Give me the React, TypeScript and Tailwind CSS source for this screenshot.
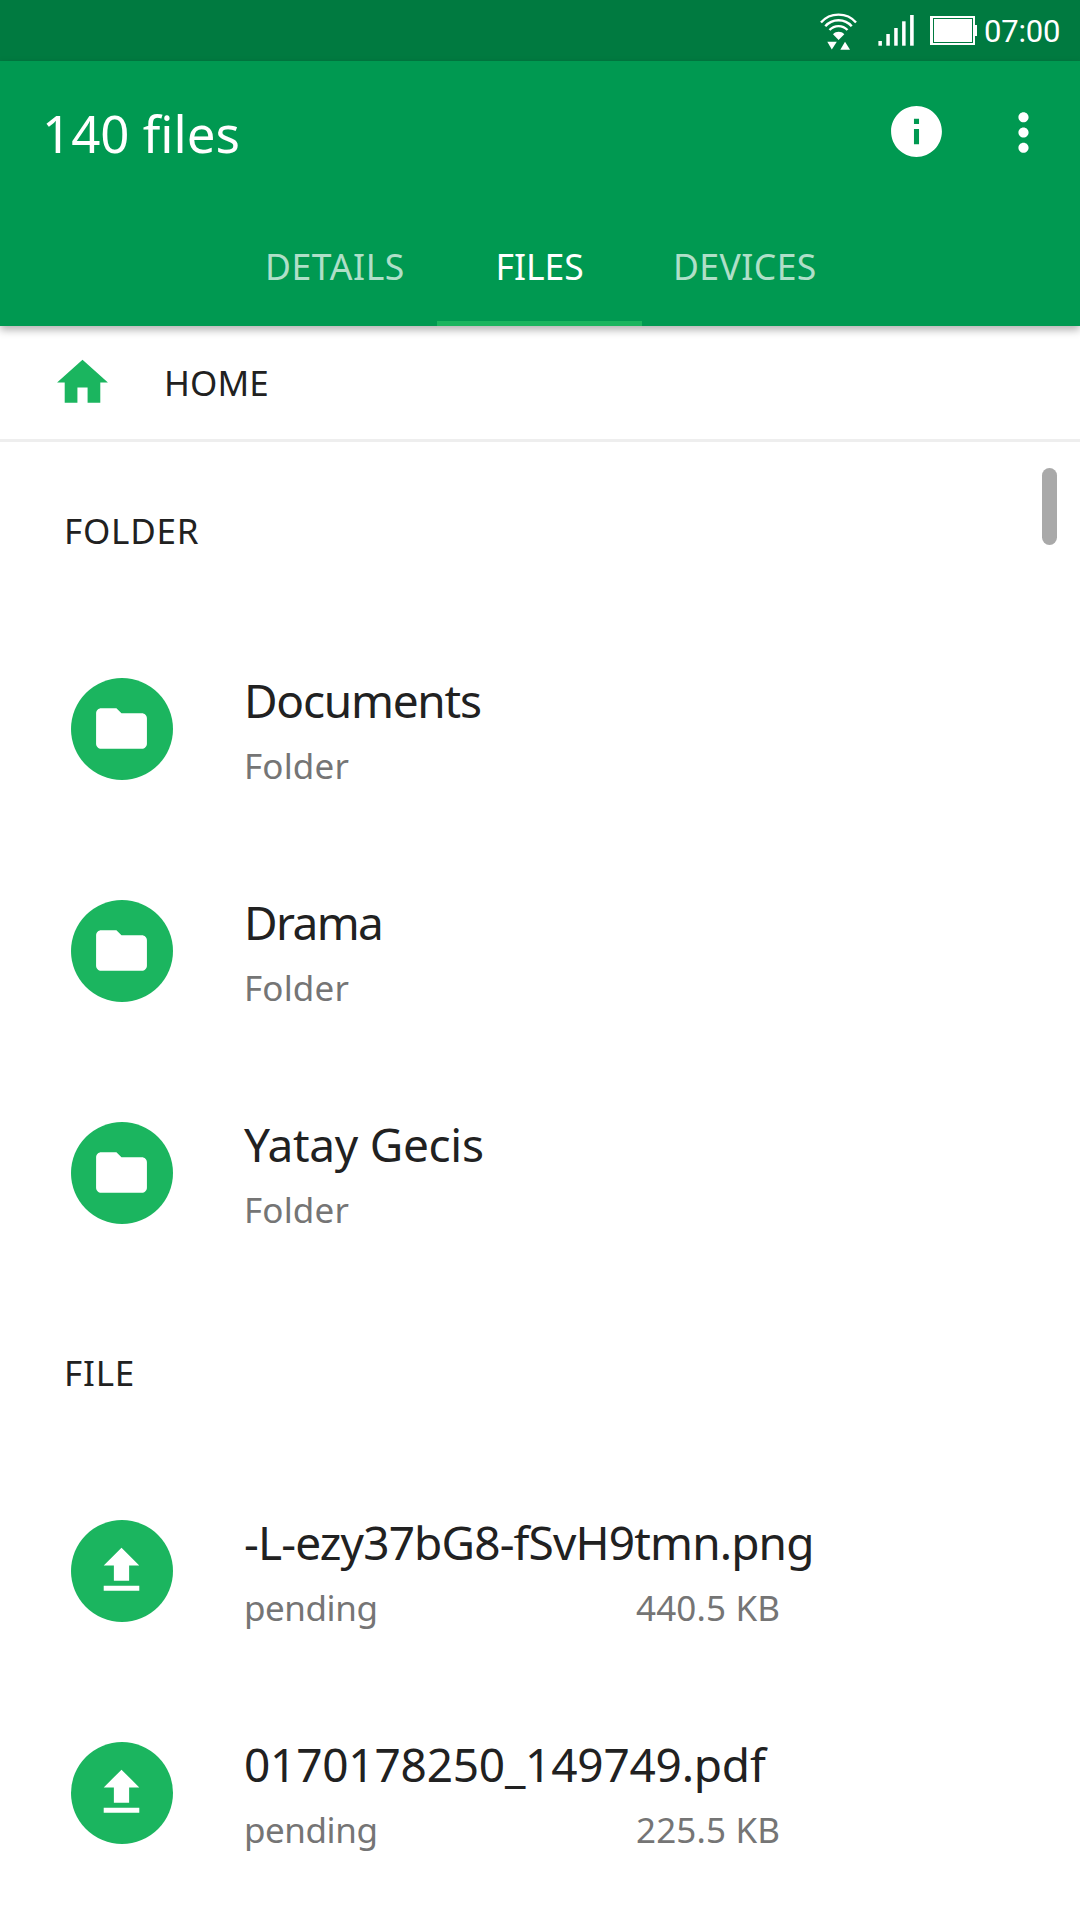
import type { ReactNode } from "react";

function StatusIcons() {
  return (
    <svg className="h-[61px] w-[180px] shrink-0" viewBox="0 0 180 61" fill="none">
      <g stroke="#fff" strokeWidth="2.4">
        <path d="M21 22.5C30 12 47 12 56 22.5" />
        <path d="M25.3 26.3C32 18.2 45 18.2 51.7 26.3" />
        <path d="M29.5 30C34.5 24.8 42.5 24.8 47.5 30" />
      </g>
      <g fill="#fff">
        <path d="M33 34.2c3.3-3.2 8-3.2 11.3 0L38.6 40z" />
        <path d="M27.3 41.7h9.5L31.8 49.5z" />
        <path d="M40.3 49.7L45 41.8l5 7.9z" />
        <rect x="78.4" y="41" width="3.5" height="4.7" />
        <rect x="86.3" y="34" width="3.5" height="11.7" />
        <rect x="94.2" y="28" width="3.5" height="17.7" />
        <rect x="102.1" y="21.3" width="3.5" height="24.4" />
        <rect x="110.1" y="15" width="3.6" height="30.7" />
        <path fillRule="evenodd" d="M130 16h45v29h-45zM133 18v25h40V18z" />
        <rect x="134" y="19" width="38" height="23" />
        <rect x="174.5" y="25" width="2.5" height="11" />
      </g>
    </svg>
  );
}

function Icon({ d, className }: { d: string; className?: string }) {
  return (
    <svg viewBox="0 0 24 24" className={`size-[61px] shrink-0 fill-current ${className ?? ""}`}>
      <path d={d} />
    </svg>
  );
}

const INFO = "M12 2C6.48 2 2 6.48 2 12s4.48 10 10 10 10-4.48 10-10S17.52 2 12 2zm1 15h-2v-6h2v6zm0-8h-2V7h2v2z";
const MORE =
  "M12 8c1.1 0 2-.9 2-2s-.9-2-2-2-2 .9-2 2 .9 2 2 2zm0 2c-1.1 0-2 .9-2 2s.9 2 2 2 2-.9 2-2-.9-2-2-2zm0 6c-1.1 0-2 .9-2 2s.9 2 2 2 2-.9 2-2-.9-2-2-2z";
const HOME = "M10 20v-6h4v6h5v-8h3L12 3 2 12h3v8z";
const FOLDER = "M10 4H4c-1.1 0-1.99.9-1.99 2L2 18c0 1.1.9 2 2 2h16c1.1 0 2-.9 2-2V8c0-1.1-.9-2-2-2h-8l-2-2z";
const UPLOAD = "M9 16h6v-6h4l-7-7-7 7h4zm-4 2h14v2H5z";

function SectionTitle({ children }: { children: ReactNode }) {
  return (
    <h2 className="flex h-[176px] items-center pt-[2px] pl-[64px] text-[35px] leading-[48px] tracking-[0.8px]">
      {children}
    </h2>
  );
}

type Entry = { name: string; nameClass: string; icon: string; note: string; noteClass: string; size?: string };

function Row({ name, nameClass, icon, note, noteClass, size }: Entry) {
  return (
    <li className="flex h-[222px] items-center pl-[71px]">
      <span className="flex size-[102px] shrink-0 items-center justify-center rounded-full bg-[#1bb55f] pr-px pb-px text-white">
        <Icon d={icon} />
      </span>
      <div className="ml-[71px] flex flex-col gap-[12px] pt-[2px]">
        <div className={`text-[46px] leading-[60px] whitespace-nowrap ${nameClass}`}>{name}</div>
        <div className="flex text-[35px] leading-[48px] text-[#757575]">
          <span className={`w-[392px] ${noteClass}`}>{note}</span>
          {size && <span className="tracking-[0.15px]">{size}</span>}
        </div>
      </div>
    </li>
  );
}

const folders: Entry[] = [
  { name: "Documents", nameClass: "tracking-[-1.25px]", icon: FOLDER, note: "Folder", noteClass: "tracking-[0.15px]" },
  { name: "Drama", nameClass: "tracking-[-1.6px]", icon: FOLDER, note: "Folder", noteClass: "tracking-[0.15px]" },
  { name: "Yatay Gecis", nameClass: "tracking-[-0.28px]", icon: FOLDER, note: "Folder", noteClass: "tracking-[0.15px]" },
];

const files: Entry[] = [
  {
    name: "-L-ezy37bG8-fSvH9tmn.png",
    nameClass: "tracking-[-0.85px]",
    icon: UPLOAD,
    note: "pending",
    noteClass: "tracking-[-0.45px]",
    size: "440.5 KB",
  },
  {
    name: "0170178250_149749.pdf",
    nameClass: "tracking-[-0.22px]",
    icon: UPLOAD,
    note: "pending",
    noteClass: "tracking-[-0.45px]",
    size: "225.5 KB",
  },
];

export default function App() {
  return (
    <div className="flex h-[1920px] w-[1080px] flex-col overflow-hidden bg-white font-['Noto_Sans',sans-serif] text-[#212121]">
      <div className="flex h-[61px] shrink-0 items-center bg-[#007a40] pl-[800px] text-white">
        <StatusIcons />
        <span className="ml-[4px] pt-[2px] font-[Roboto,sans-serif] text-[31px] leading-[40px] tracking-[-0.2px]">
          07:00
        </span>
      </div>

      <header className="relative z-10 shrink-0 bg-[#009951] text-white shadow-[0_4px_8px_rgba(0,0,0,0.3)]">
        <div className="flex h-[142px] items-center pr-[26px] pl-[42px]">
          <h1 className="flex-1 pt-px text-[51px] leading-[64px]">140 files</h1>
          <Icon d={INFO} className="mb-px" />
          <Icon d={MORE} className="ml-[46px]" />
        </div>
        <nav className="flex h-[123px] justify-center text-[35.5px] leading-[127px] text-white/70">
          <span className="w-[205px] pl-[33.5px] tracking-[0.6px]">DETAILS</span>
          <span className="w-[205px] border-b-[5px] border-[#1bb55f] pl-[59px] tracking-[0px] text-white">FILES</span>
          <span className="w-[207px] pl-[31.5px] tracking-[0.45px]">DEVICES</span>
        </nav>
      </header>

      <div className="flex h-[116px] shrink-0 items-center border-b-3 border-[#eee] pl-[52px]">
        <Icon d={HOME} className="text-[#1bb55f]" />
        <span className="ml-[51px] text-[35px] leading-[48px] tracking-[0.1px]">HOME</span>
      </div>

      <main className="relative flex-1 overflow-hidden">
        <SectionTitle>FOLDER</SectionTitle>
        <ul>
          {folders.map((f) => (
            <Row key={f.name} {...f} />
          ))}
        </ul>
        <SectionTitle>FILE</SectionTitle>
        <ul>
          {files.map((f) => (
            <Row key={f.name} {...f} />
          ))}
        </ul>
        <div className="absolute top-[26px] right-[23px] h-[77px] w-[15px] rounded-full bg-[#a9a9a9]" />
      </main>
    </div>
  );
}
